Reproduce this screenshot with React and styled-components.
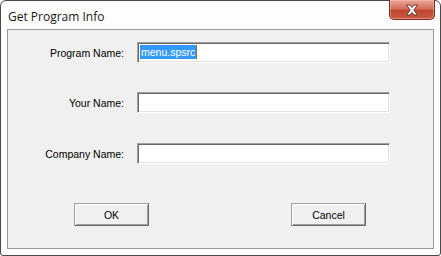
import styled, { createGlobalStyle } from "styled-components";

const Global = createGlobalStyle`
  html, body { margin: 0; padding: 0; background: #ffffff; }
  body { width: 441px; height: 256px; overflow: hidden; }
`;

const Window = styled.div`
  box-sizing: border-box;
  width: 441px;
  height: 256px;
  border: 1px solid #4a4a4a;
  border-radius: 6px 6px 3px 3px;
  background: #fdfdfd;
  padding: 0 6px 6px 6px;
  display: flex;
  flex-direction: column;
  font-family: "Liberation Sans", Arial, sans-serif;
`;

const TitleBar = styled.div`
  height: 28px;
  display: flex;
  justify-content: space-between;
  align-items: flex-start;
`;

const Title = styled.div`
  padding: 7px 0 0 1px;
  font-size: 12px;
  color: #1a1a1a;
  font-family: "Open Sans", "Liberation Sans", sans-serif;
`;

const CloseBtn = styled.div`
  box-sizing: border-box;
  width: 46px;
  height: 20px;
  margin-top: -1px;
  margin-right: -1px;
  border: 1px solid #7a3024;
  border-top: none;
  border-radius: 0 0 5px 5px;
  background: linear-gradient(#e8a598 0%, #d4705c 45%, #c0452f 55%, #c85a3e 100%);
  box-shadow: inset 0 0 0 1px rgba(255, 200, 190, 0.45);
  display: flex;
  align-items: center;
  justify-content: center;
`;

const Client = styled.div`
  flex: 1;
  box-sizing: border-box;
  border: 1px solid #9a9a9a;
  background: #f0f0f0;
  padding: 12px 0 0 0;
  display: flex;
  flex-direction: column;
`;

const Row = styled.div`
  display: flex;
  align-items: center;
  height: 21px;
  margin-bottom: ${(p) => p.$gap}px;
`;

const Label = styled.div`
  width: 116px;
  text-align: right;
  font-size: 10.5px;
  color: #000;
  padding-right: 13px;
`;

const Field = styled.div`
  box-sizing: border-box;
  width: 253px;
  height: 21px;
  background: #fff;
  border-top: 1px solid #a0a0a0;
  border-left: 1px solid #a0a0a0;
  border-right: 1px solid #ffffff;
  border-bottom: 1px solid #ffffff;
  box-shadow: inset 1px 1px 0 #696969, inset -1px -1px 0 #e3e3e3;
  padding: 2px 0 0 2px;
  font-size: 10.5px;
  display: flex;
  align-items: flex-start;
`;

const Selected = styled.span`
  background: #3399ff;
  color: #fff;
  line-height: 14px;
  height: 14px;
  padding: 0 1px 0 1px;
`;

const Caret = styled.span`
  width: 1px;
  height: 14px;
  background: #9a6a2c;
`;

const Buttons = styled.div`
  display: flex;
  justify-content: space-between;
  padding: 0 67px 0 66px;
  margin-top: 9px;
`;

const Button = styled.div`
  box-sizing: border-box;
  width: 75px;
  height: 23px;
  border-top: 1px solid #a0a0a0;
  border-left: 1px solid #a0a0a0;
  border-right: 1px solid #696969;
  border-bottom: 1px solid #696969;
  box-shadow: inset 1px 1px 0 #ffffff, inset -1px -1px 0 #a0a0a0;
  background: #f0f0f0;
  display: flex;
  align-items: center;
  justify-content: center;
  font-size: 10.5px;
  color: #000;
`;

function CloseIcon() {
  return (
    <svg width="14" height="12" viewBox="0 0 14 12">
      <path
        d="M1.5 1 H5 L7 3.5 L9 1 H12.5 L8.8 6 L12.5 11 H9 L7 8.5 L5 11 H1.5 L5.2 6 Z"
        fill="#ffffff"
        stroke="#5a2a20"
        strokeWidth="0.9"
        strokeLinejoin="round"
      />
    </svg>
  );
}

export default function App() {
  return (
    <>
      <Global />
      <Window>
        <TitleBar>
          <Title>Get Program Info</Title>
          <CloseBtn>
            <CloseIcon />
          </CloseBtn>
        </TitleBar>
        <Client>
          <Row $gap={29}>
            <Label>Program Name:</Label>
            <Field>
              <Selected>menu.spsrc</Selected>
              <Caret />
            </Field>
          </Row>
          <Row $gap={30}>
            <Label>Your Name:</Label>
            <Field />
          </Row>
          <Row $gap={30}>
            <Label>Company Name:</Label>
            <Field />
          </Row>
          <Buttons>
            <Button>OK</Button>
            <Button>Cancel</Button>
          </Buttons>
        </Client>
      </Window>
    </>
  );
}
